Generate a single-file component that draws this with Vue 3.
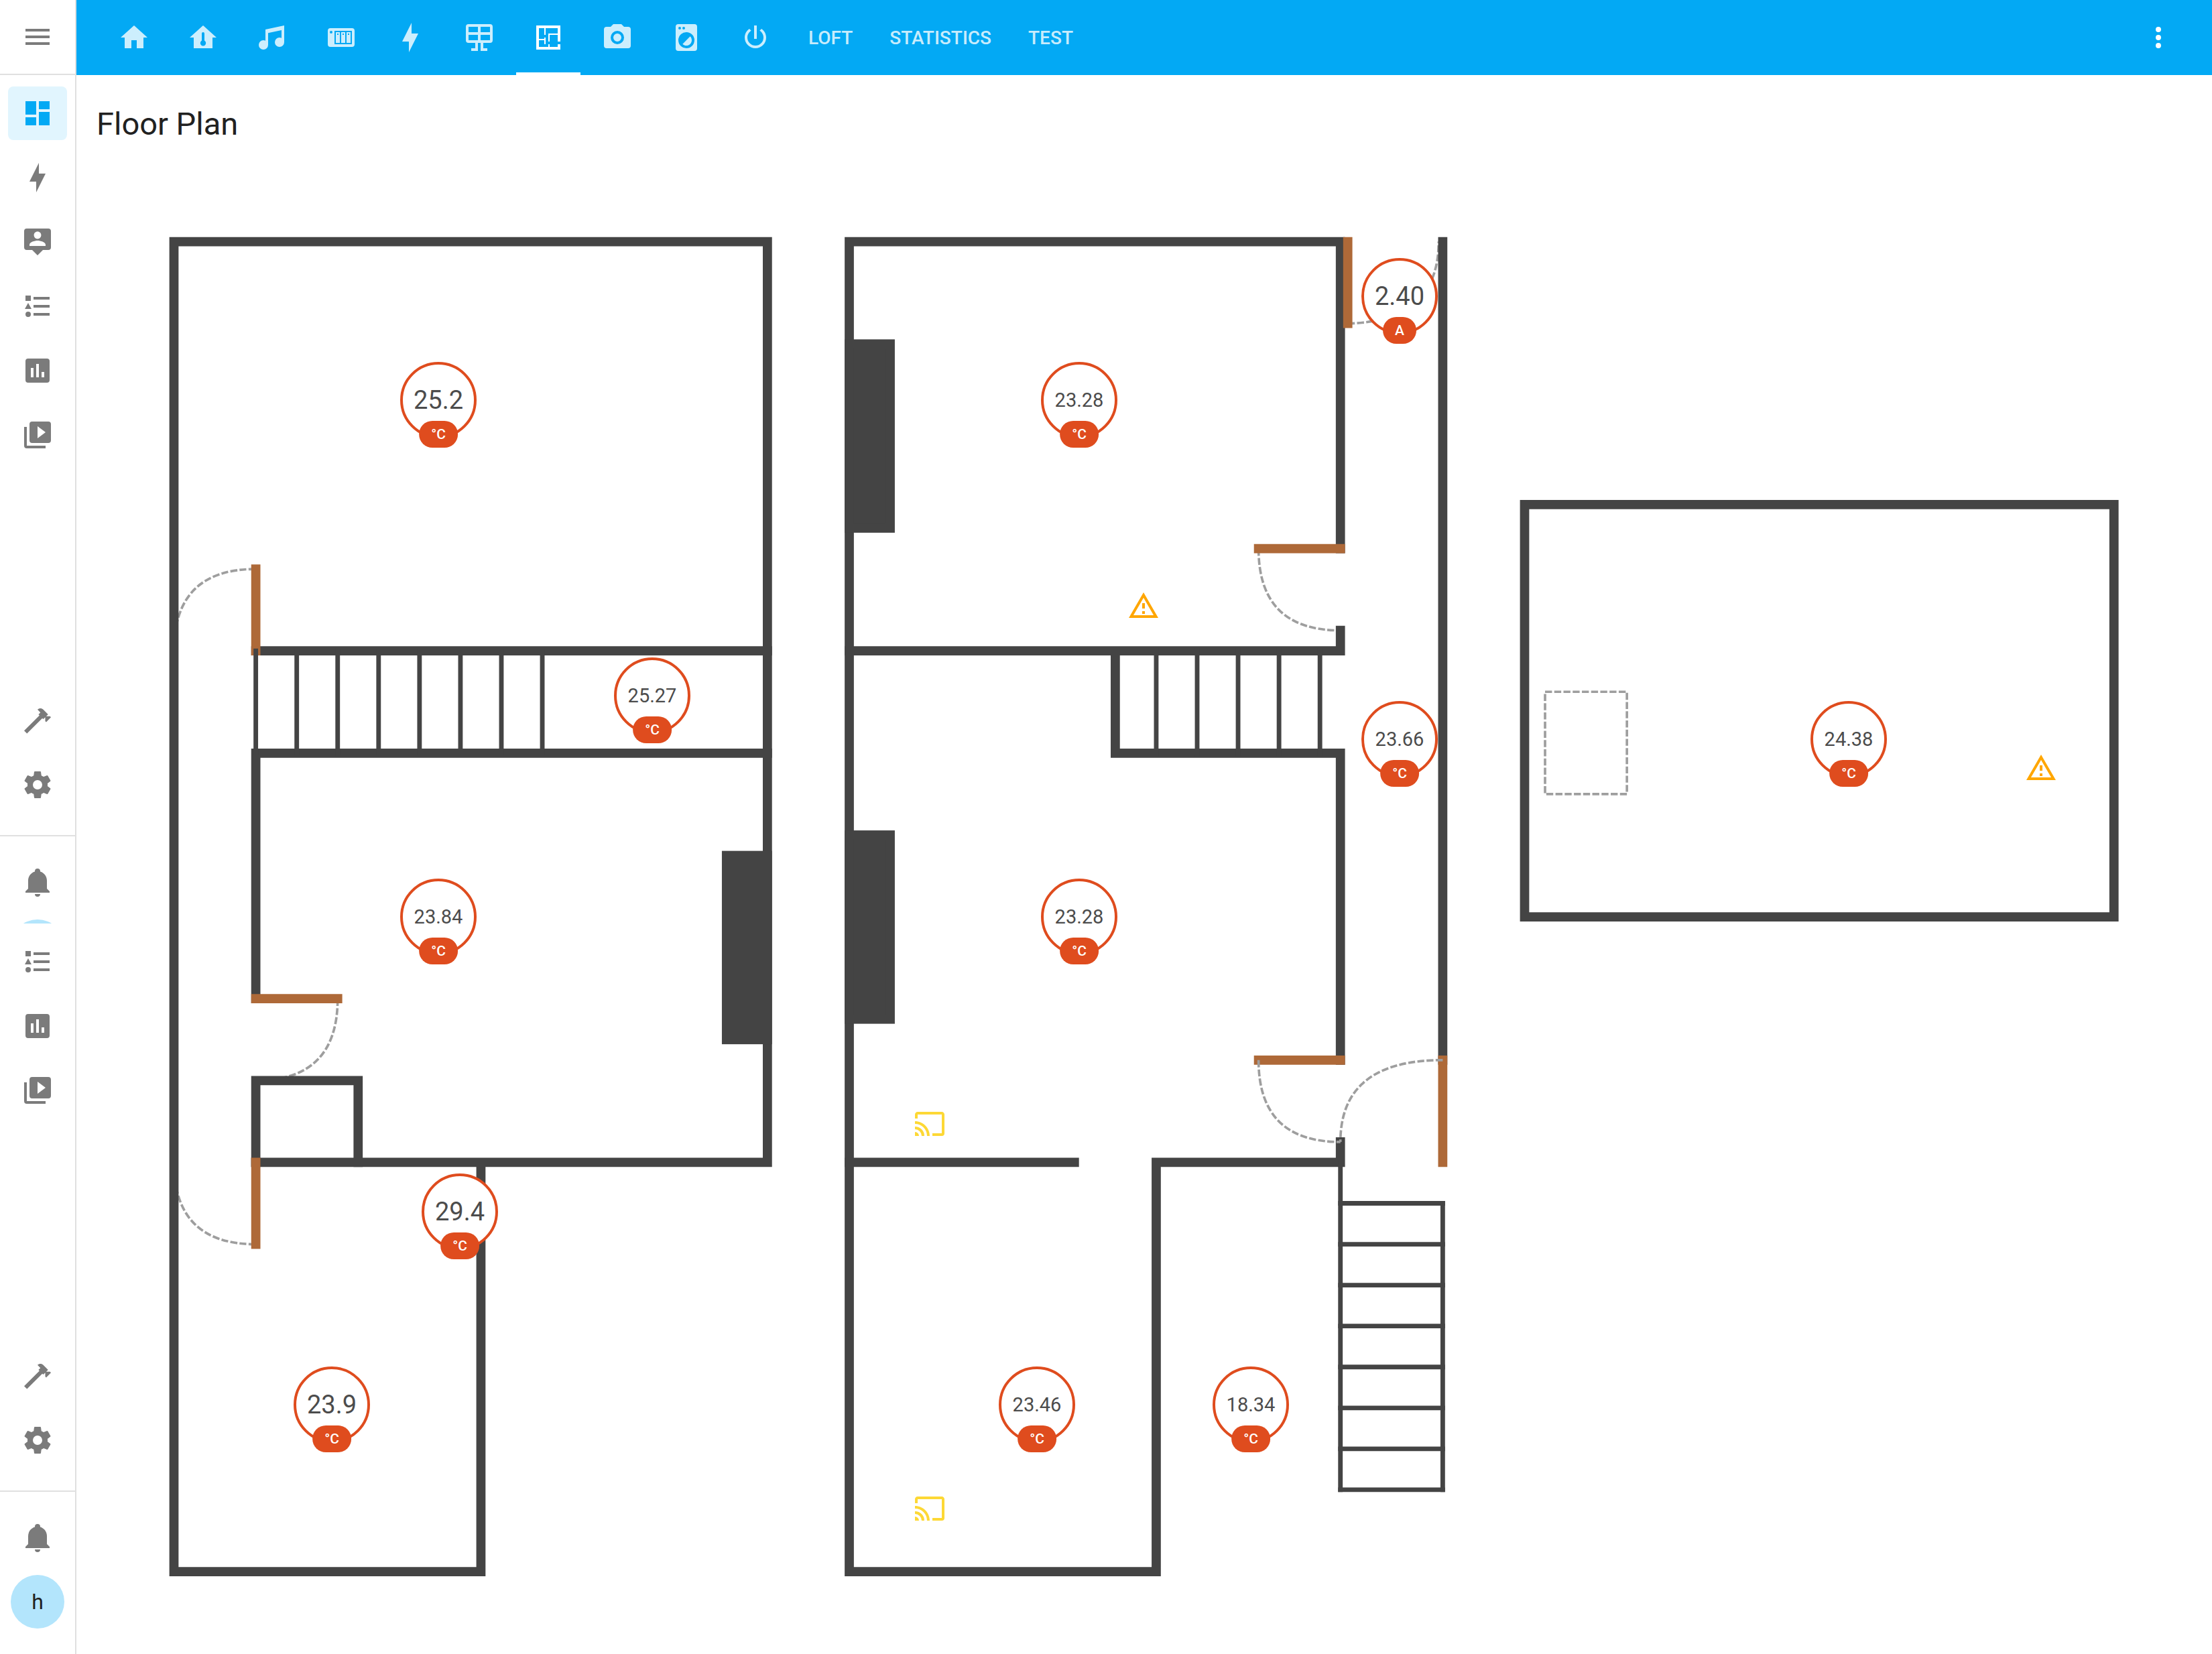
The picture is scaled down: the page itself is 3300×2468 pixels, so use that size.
<script setup>
const icons = {
  menu: 'M3,6H21V8H3V6M3,11H21V13H3V11M3,16H21V18H3V16Z',
  dashboard: 'M13,3V9H21V3M13,21H21V11H13M3,21H11V15H3M3,13H11V3H3V13Z',
  flash: 'M11,15H6L13,1V9H18L11,23V15Z',
  account: 'M20,2H4A2,2 0 0,0 2,4V16A2,2 0 0,0 4,18H8L12,22L16,18H20A2,2 0 0,0 22,16V4A2,2 0 0,0 20,2M12,4.3C13.5,4.3 14.7,5.5 14.7,7C14.7,8.5 13.5,9.7 12,9.7C10.5,9.7 9.3,8.5 9.3,7C9.3,5.5 10.5,4.3 12,4.3M18,15H6V14.1C6,12.1 10,11 12,11C14,11 18,12.1 18,14.1V15Z',
  list: 'M5,9.5L7.5,14H2.5L5,9.5M3,4H7V8H3V4M5,20A2,2 0 0,0 7,18A2,2 0 0,0 5,16A2,2 0 0,0 3,18A2,2 0 0,0 5,20M9,5V7H21V5H9M9,19H21V17H9V19M9,11V13H21V11H9Z',
  chart: 'M19,3H5A2,2 0 0,0 3,5V19A2,2 0 0,0 5,21H19A2,2 0 0,0 21,19V5A2,2 0 0,0 19,3M9,17H7V10H9V17M13,17H11V7H13V17M17,17H15V13H17V17Z',
  media: 'M4,6H2V20A2,2 0 0,0 4,22H18V20H4V6M20,2H8A2,2 0 0,0 6,4V16A2,2 0 0,0 8,18H20A2,2 0 0,0 22,16V4A2,2 0 0,0 20,2M12,14.5V5.5L18,10L12,14.5Z',
  hammer: 'M2,19.63L13.43,8.2L12.72,7.5L14.14,6.07L12,3.89C13.2,2.7 15.09,2.7 16.27,3.89L19.87,7.5L18.45,8.91H21.29L22,9.62L18.45,13.21L17.74,12.5V9.62L16.27,11.04L15.56,10.33L4.13,21.76L2,19.63Z',
  cog: 'M12,15.5A3.5,3.5 0 0,1 8.5,12A3.5,3.5 0 0,1 12,8.5A3.5,3.5 0 0,1 15.5,12A3.5,3.5 0 0,1 12,15.5M19.43,12.97C19.47,12.65 19.5,12.33 19.5,12C19.5,11.67 19.47,11.34 19.43,11L21.54,9.37C21.73,9.22 21.78,8.95 21.66,8.73L19.66,5.27C19.54,5.05 19.27,4.96 19.05,5.05L16.56,6.05C16.04,5.66 15.5,5.32 14.87,5.07L14.5,2.42C14.46,2.18 14.25,2 14,2H10C9.75,2 9.54,2.18 9.5,2.42L9.13,5.07C8.5,5.32 7.96,5.66 7.44,6.05L4.95,5.05C4.73,4.96 4.46,5.05 4.34,5.27L2.34,8.73C2.21,8.95 2.27,9.22 2.46,9.37L4.57,11C4.53,11.34 4.5,11.67 4.5,12C4.5,12.33 4.53,12.65 4.57,12.97L2.46,14.63C2.27,14.78 2.21,15.05 2.34,15.27L4.34,18.73C4.46,18.95 4.73,19.03 4.95,18.95L7.44,17.94C7.96,18.34 8.5,18.68 9.13,18.93L9.5,21.58C9.54,21.82 9.75,22 10,22H14C14.25,22 14.46,21.82 14.5,21.58L14.87,18.93C15.5,18.67 16.04,18.34 16.56,17.94L19.05,18.95C19.27,19.03 19.54,18.95 19.66,18.73L21.66,15.27C21.78,15.05 21.73,14.78 21.54,14.63L19.43,12.97Z',
  bell: 'M21,19V20H3V19L5,17V11C5,7.9 7.03,5.17 10,4.29C10,4.19 10,4.1 10,4A2,2 0 0,1 12,2A2,2 0 0,1 14,4C14,4.1 14,4.19 14,4.29C16.97,5.17 19,7.9 19,11V17L21,19M14,21A2,2 0 0,1 12,23A2,2 0 0,1 10,21',
  home: 'M10,20V14H14V20H19V12H22L12,3L2,12H5V20H10Z',
  homeTemp: 'M12,3L2,12H5V20H19V12H22L12,3M12,8A1,1 0 0,1 13,9V14.3A2.1,2.1 0 1,1 11,14.3V9A1,1 0 0,1 12,8Z',
  music: 'M21,3V15.5A3.5,3.5 0 0,1 17.5,19A3.5,3.5 0 0,1 14,15.5A3.5,3.5 0 0,1 17.5,12C18.04,12 18.55,12.12 19,12.34V6.47L9,8.6V17.5A3.5,3.5 0 0,1 5.5,21A3.5,3.5 0 0,1 2,17.5A3.5,3.5 0 0,1 5.5,14C6.04,14 6.55,14.12 7,14.34V6L21,3Z',
  heater: 'M4,5H20A2,2 0 0,1 22,7V17A2,2 0 0,1 20,19H4A2,2 0 0,1 2,17V7A2,2 0 0,1 4,5M7,7V17H20V7H7M8,8H11V16H8V8M12,8H15V16H12V8M16,8H19V16H16V8M9,9V10H10V9H9M13,9V10H14V9H13M17,9V10H18V9H17M4.5,7A1,1 0 0,0 3.5,8A1,1 0 0,0 4.5,9A1,1 0 0,0 5.5,8A1,1 0 0,0 4.5,7Z',
  solar: 'M4,2H20A2,2 0 0,1 22,4V14A2,2 0 0,1 20,16H15V20H18V22H13V16H11V22H6V20H9V16H4A2,2 0 0,1 2,14V4A2,2 0 0,1 4,2M4,4V8H11V4H4M4,10V14H11V10H4M20,14V10H13V14H20M20,8V4H13V8H20Z',
  floor: 'M10,5V10H9V5H5V13H9V12H10V17H9V14H5V19H12V17H13V19H19V17H21V21H3V3H21V15H19V10H13V15H12V9H19V5H10Z',
  camera: 'M4,4H7L9,2H15L17,4H20A2,2 0 0,1 22,6V18A2,2 0 0,1 20,20H4A2,2 0 0,1 2,18V6A2,2 0 0,1 4,4M12,7A5,5 0 0,0 7,12A5,5 0 0,0 12,17A5,5 0 0,0 17,12A5,5 0 0,0 12,7M12,9A3,3 0 0,1 15,12A3,3 0 0,1 12,15A3,3 0 0,1 9,12A3,3 0 0,1 12,9Z',
  washer: 'M14.83,11.17C16.39,12.73 16.39,15.27 14.83,16.83C13.27,18.39 10.73,18.39 9.17,16.83L14.83,11.17M6,2H18A2,2 0 0,1 20,4V20A2,2 0 0,1 18,22H6A2,2 0 0,1 4,20V4A2,2 0 0,1 6,2M7,4A1,1 0 0,0 6,5A1,1 0 0,0 7,6A1,1 0 0,0 8,5A1,1 0 0,0 7,4M10,4A1,1 0 0,0 9,5A1,1 0 0,0 10,6A1,1 0 0,0 11,5A1,1 0 0,0 10,4M12,8A6,6 0 0,0 6,14A6,6 0 0,0 12,20A6,6 0 0,0 18,14A6,6 0 0,0 12,8Z',
  power: 'M16.56,5.44L15.11,6.89C16.84,7.94 18,9.83 18,12A6,6 0 0,1 12,18A6,6 0 0,1 6,12C6,9.83 7.16,7.94 8.88,6.88L7.44,5.44C5.36,6.88 4,9.28 4,12A8,8 0 0,0 12,20A8,8 0 0,0 20,12C20,9.28 18.64,6.88 16.56,5.44M13,3H11V13H13V3Z',
  dots: 'M12,16A2,2 0 0,1 14,18A2,2 0 0,1 12,20A2,2 0 0,1 10,18A2,2 0 0,1 12,16M12,10A2,2 0 0,1 14,12A2,2 0 0,1 12,14A2,2 0 0,1 10,12A2,2 0 0,1 12,10M12,4A2,2 0 0,1 14,6A2,2 0 0,1 12,8A2,2 0 0,1 10,6A2,2 0 0,1 12,4Z',
  alert: 'M12,2L1,21H23L12,2M12,6L19.53,19H4.47L12,6M11,10V14H13V10H11M11,16V18H13V16H11Z',
  cast: 'M1,10V12A9,9 0 0,1 10,21H12C12,14.92 7.07,10 1,10M1,14V16A5,5 0 0,1 6,21H8A7,7 0 0,0 1,14M1,18V21H4A3,3 0 0,0 1,18M21,3H3C1.89,3 1,3.89 1,5V8H3V5H21V19H14V21H21A2,2 0 0,0 23,19V5C23,3.89 22.1,3 21,3Z',
}

const mainNav = [
  { icon: 'dashboard', label: 'Overview', active: true },
  { icon: 'flash', label: 'Energy' },
  { icon: 'account', label: 'Map' },
  { icon: 'list', label: 'Logbook' },
  { icon: 'chart', label: 'History' },
  { icon: 'media', label: 'Media' },
]
const moreNav = mainNav.slice(3)
const toolNav = [
  { icon: 'hammer', label: 'Developer tools' },
  { icon: 'cog', label: 'Settings' },
]

const tabs = [
  { icon: 'home', label: 'Home' },
  { icon: 'homeTemp', label: 'Climate' },
  { icon: 'music', label: 'Music' },
  { icon: 'heater', label: 'Heating' },
  { icon: 'flash', label: 'Energy' },
  { icon: 'solar', label: 'Solar' },
  { icon: 'floor', label: 'Floor Plan', active: true },
  { icon: 'camera', label: 'Cameras' },
  { icon: 'washer', label: 'Appliances' },
  { icon: 'power', label: 'Power' },
  { text: 'Loft' },
  { text: 'Statistics' },
  { text: 'Test' },
]

// The drawing uses ten units per grid square.
const walls = [
  'M0,0H290V450H40M0,0V650H150V450',
  'M40,200H290M40,370V250H290M40,450V410H90V450',
  'M330,0V650H480V450H570V440M330,0H570V150',
  'M330,200H570V190M460,200V250H570V400M330,450H440',
  'M620,0V400',
  'M660,128.5H948V330H660Z',
]
const chimneys = [
  { x: 270, y: 300 },
  { x: 330, y: 50 },
  { x: 330, y: 290 },
]
const doors = [
  'M40,160V200', 'M40,370H80', 'M40,450V490',
  'M573.6,0V40', 'M530,150H570', 'M530,400H570', 'M620,400V450',
]
const swings = [
  'M40,160Q0,160 0,200', 'M80,370Q80,410 40,410', 'M40,490Q0,490 0,450',
  'M573.6,40Q618,39 618,0', 'M530,150Q530,190 570,190',
  'M530,400Q530,440 570,440', 'M620,400Q570,400 570,440',
]
const arcsBehind = swings.slice(0, 5)
const arcsFront = swings.slice(5)
const stairs = [
  ...[40, 60, 80, 100, 120, 140, 160, 180].map((x) => `M${x},200V250`),
  ...[480, 500, 520, 540, 560].map((x) => `M${x},200V250`),
  ...[470, 490, 510, 530, 550, 570, 590, 610].map((y) => `M570,${y}H620`),
  'M570,450V610', 'M620,470V610',
]

const view = { x: 114, y: 240, w: 3186, h: 2228 }
const viewBox = `${view.x} ${view.y} ${view.w} ${view.h}`
const place = (p) => ({
  left: `${((p.x - view.x) / view.w) * 100}%`,
  top: `${((p.y - view.y) / view.h) * 100}%`,
})

const sensors = [
  { x: 654, y: 597, value: '25.2', unit: '°C' },
  { x: 1610, y: 597, value: '23.28', unit: '°C' },
  { x: 2088, y: 442, value: '2.40', unit: 'A' },
  { x: 973, y: 1038, value: '25.27', unit: '°C' },
  { x: 2088, y: 1103, value: '23.66', unit: '°C' },
  { x: 2758, y: 1103, value: '24.38', unit: '°C' },
  { x: 654, y: 1368, value: '23.84', unit: '°C' },
  { x: 1610, y: 1368, value: '23.28', unit: '°C' },
  { x: 686, y: 1808, value: '29.4', unit: '°C' },
  { x: 495, y: 2096, value: '23.9', unit: '°C' },
  { x: 1547, y: 2096, value: '23.46', unit: '°C' },
  { x: 1866, y: 2096, value: '18.34', unit: '°C' },
]
const markers = [
  { x: 1706, y: 904, icon: 'alert', label: 'Unavailable' },
  { x: 3045, y: 1146, icon: 'alert', label: 'Unavailable' },
  { x: 1387, y: 1677, icon: 'cast', label: 'Speaker' },
  { x: 1387, y: 2251, icon: 'cast', label: 'Speaker' },
]
</script>

<template>
  <div class="app">
    <aside class="sidebar">
      <div class="menu-bar">
        <button class="icon-button" aria-label="Menu">
          <svg class="icon" viewBox="0 0 24 24"><path :d="icons.menu" /></svg>
        </button>
      </div>
      <nav class="nav">
        <a v-for="n in mainNav" :key="n.icon" href="#" class="item" :class="{ active: n.active }" :aria-label="n.label">
          <svg class="icon" viewBox="0 0 24 24"><path :d="icons[n.icon]" /></svg>
        </a>
      </nav>
      <div class="spacer"></div>
      <nav class="nav tools">
        <a v-for="n in toolNav" :key="n.icon" href="#" class="item" :aria-label="n.label">
          <svg class="icon" viewBox="0 0 24 24"><path :d="icons[n.icon]" /></svg>
        </a>
      </nav>
      <div class="nav account">
        <a href="#" class="item" aria-label="Notifications">
          <svg class="icon" viewBox="0 0 24 24"><path :d="icons.bell" /></svg>
        </a>
        <div class="peek"><span class="avatar"></span></div>
      </div>
      <nav class="nav">
        <a v-for="n in moreNav" :key="n.icon" href="#" class="item" :aria-label="n.label">
          <svg class="icon" viewBox="0 0 24 24"><path :d="icons[n.icon]" /></svg>
        </a>
      </nav>
      <div class="spacer"></div>
      <nav class="nav tools">
        <a v-for="n in toolNav" :key="n.icon" href="#" class="item" :aria-label="n.label">
          <svg class="icon" viewBox="0 0 24 24"><path :d="icons[n.icon]" /></svg>
        </a>
      </nav>
      <div class="nav account last">
        <a href="#" class="item" aria-label="Notifications">
          <svg class="icon" viewBox="0 0 24 24"><path :d="icons.bell" /></svg>
        </a>
        <a href="#" class="avatar">h</a>
      </div>
    </aside>

    <div class="content">
      <header class="toolbar">
        <nav class="tabs">
          <a
            v-for="t in tabs"
            :key="t.label || t.text"
            href="#"
            class="tab"
            :class="{ active: t.active }"
            :aria-label="t.label"
          >
            <svg v-if="t.icon" class="icon" viewBox="0 0 24 24"><path :d="icons[t.icon]" /></svg>
            <template v-else>{{ t.text }}</template>
          </a>
        </nav>
        <button class="icon-button" aria-label="Options">
          <svg class="icon" viewBox="0 0 24 24"><path :d="icons.dots" /></svg>
        </button>
      </header>

      <main>
        <h1>Floor Plan</h1>
        <div class="plan">
          <svg class="drawing" :viewBox="viewBox" aria-hidden="true">
            <g transform="translate(259.5 360.6) scale(3.053)">
              <path v-for="d in arcsBehind" :key="d" :d="d" class="swing" />
              <path v-for="d in walls" :key="d" :d="d" class="wall" />
              <rect v-for="c in chimneys" :key="c.x + '-' + c.y" :x="c.x" :y="c.y" width="20" height="90" class="chimney" />
              <path v-for="d in doors" :key="d" :d="d" class="door" />
              <path v-for="d in stairs" :key="d" :d="d" class="stair" />
              <path v-for="d in arcsFront" :key="d" :d="d" class="swing" />
              <rect x="670" y="220" width="40" height="50" class="swing" />
            </g>
          </svg>
          <button v-for="(s, i) in sensors" :key="i" class="sensor" :style="place(s)">
            <span class="value" :class="{ small: s.value.length > 4 }">{{ s.value }}</span>
            <span class="unit">{{ s.unit }}</span>
          </button>
          <button
            v-for="(m, i) in markers"
            :key="i"
            class="marker"
            :class="m.icon"
            :style="place(m)"
            :aria-label="m.label"
          >
            <svg class="icon" viewBox="0 0 24 24"><path :d="icons[m.icon]" /></svg>
          </button>
        </div>
      </main>
    </div>
  </div>
</template>

<style>
body {
  background: #fff;
}
</style>

<style scoped>
* {
  box-sizing: border-box;
}
.app {
  display: flex;
  min-height: 100vh;
  font-family: Roboto, "Noto Sans", sans-serif;
  color: #212121;
}
a {
  color: inherit;
  text-decoration: none;
}
button {
  border: 0;
  padding: 0;
  background: none;
  color: inherit;
  font: inherit;
}
.icon {
  display: block;
  width: 48px;
  height: 48px;
  fill: currentColor;
  fill-rule: evenodd;
}
.sidebar {
  display: flex;
  flex-direction: column;
  flex: none;
  width: 114px;
  border-right: 2px solid #e0e0e0;
  color: #7b7b7b;
}
.menu-bar {
  display: flex;
  align-items: center;
  justify-content: center;
  height: 112px;
  border-bottom: 2px solid #e0e0e0;
}
.nav {
  display: flex;
  flex-direction: column;
  align-items: center;
  gap: 16px;
  padding-top: 17px;
}
.item {
  display: flex;
  align-items: center;
  justify-content: center;
  width: 88px;
  height: 80px;
  border-radius: 8px;
}
.item.active {
  background: #e1f5fe;
  color: #03a9f4;
}
.spacer {
  flex: 1;
}
.tools {
  padding: 0 0 35px;
}
.account {
  padding-top: 28px;
  border-top: 2px solid #e0e0e0;
}
.account.last {
  padding-bottom: 38px;
}
.avatar {
  display: flex;
  align-items: center;
  justify-content: center;
  width: 80px;
  height: 80px;
  border-radius: 50%;
  background: #b3e5fc;
  color: #212121;
  font-size: 32px;
}
.peek {
  height: 6px;
  overflow: hidden;
}
.content {
  flex: 1;
  min-width: 0;
}
.toolbar {
  display: flex;
  align-items: center;
  justify-content: space-between;
  height: 112px;
  padding: 0 56px 0 38px;
  background: #03a9f4;
  color: #fff;
}
.tabs {
  display: flex;
  align-self: stretch;
  gap: 7px;
}
.tab {
  display: flex;
  align-items: center;
  justify-content: center;
  padding: 4px 24px 0;
  border-bottom: 4px solid transparent;
  color: rgba(255, 255, 255, 0.8);
  font-size: 28px;
  font-weight: 500;
  text-transform: uppercase;
}
.tab.active {
  border-color: #fff;
  color: #fff;
}
h1 {
  margin: 0;
  padding: 41px 30px 23px;
  font-size: 47px;
  font-weight: 400;
  line-height: 64px;
}
.plan {
  position: relative;
}
.drawing {
  display: block;
  width: 100%;
  height: auto;
}
.drawing path,
.drawing rect {
  fill: none;
  stroke: #444;
  stroke-width: 4.5;
  stroke-linecap: square;
}
.drawing .chimney {
  fill: #444;
}
.drawing .door {
  stroke: #ae6938;
}
.drawing .stair {
  stroke-width: 2.25;
}
.drawing .swing {
  stroke: #9e9e9e;
  stroke-width: 1.2;
  stroke-linecap: butt;
  stroke-dasharray: 3.4 1.1;
}
.sensor {
  position: absolute;
  display: flex;
  align-items: center;
  justify-content: center;
  width: 114px;
  height: 114px;
  margin: -57px 0 0 -57px;
  border: 4px solid #df4c1e;
  border-radius: 50%;
  background: #fff;
  color: #4c4c4c;
}
.value {
  font-size: 38px;
}
.value.small {
  font-size: 29px;
}
.unit {
  position: absolute;
  bottom: -18px;
  left: 50%;
  transform: translateX(-50%);
  height: 40px;
  padding: 0 18px;
  border-radius: 20px;
  background: #df4c1e;
  color: #fff;
  font-size: 21px;
  font-weight: 500;
  line-height: 40px;
}
.marker {
  position: absolute;
  margin: -24px 0 0 -24px;
}
.marker.alert {
  color: #ffa600;
}
.marker.cast {
  color: #fdd835;
}
</style>
